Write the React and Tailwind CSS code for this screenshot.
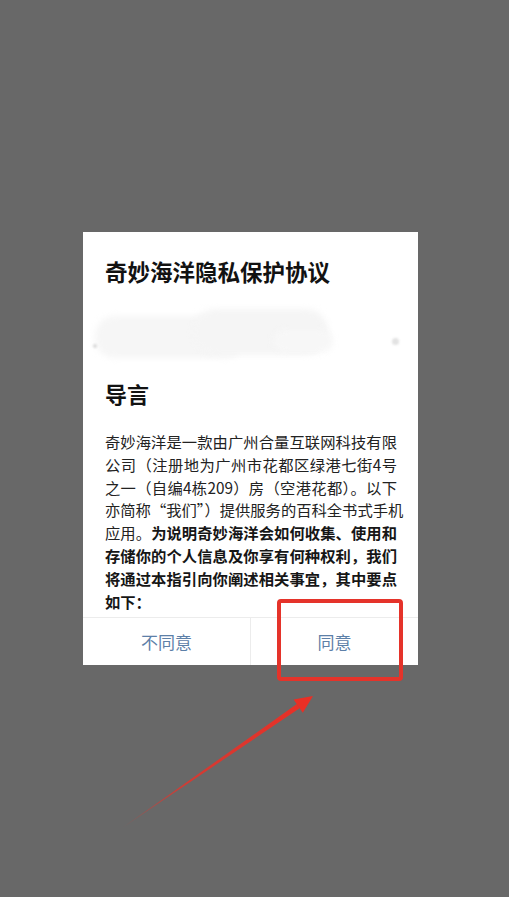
import React from 'react';

const lines = [
  { text: '奇妙海洋是一款由广州合量互联网科技有限' },
  { text: '公司（注册地为广州市花都区绿港七街4号' },
  { text: '之一（自编4栋209）房（空港花都）。以下' },
  { text: '亦简称“我们”）提供服务的百科全书式手机' },
  { text: '应用。', bold: '为说明奇妙海洋会如何收集、使用和' },
  { bold: '存储你的个人信息及你享有何种权利，我们' },
  { bold: '将通过本指引向你阐述相关事宜，其中要点' },
  { bold: '如下：', last: true },
];

export default function App() {
  return (
    <div className="relative w-full h-[897px] bg-[#686868] overflow-hidden pt-[232px] pl-[83px] font-['Noto_Sans_CJK_SC','Noto_Sans',sans-serif]">
      {/* dialog */}
      <div className="w-[335px] h-[433px] bg-white flex flex-col">
        <div className="h-[385px] overflow-hidden px-[22px] pt-[24px]">
          <h1 className="text-[22.5px] leading-[30px] font-bold text-[#121212]">奇妙海洋隐私保护协议</h1>

          {/* smudged-out line */}
          <div className="relative h-[54px] mt-[20px] -mx-[12px]">
            <div className="absolute left-[2px] top-[10px] w-[150px] h-[42px] rounded-[20px] bg-[#f6f6f6] blur-[3px]" />
            <div className="absolute left-[100px] top-[3px] w-[135px] h-[46px] rounded-[22px] bg-[#f5f5f5] blur-[3px]" />
            <div className="absolute left-[180px] top-[24px] w-[60px] h-[22px] rounded-[11px] bg-[#f7f7f7] blur-[3px]" />
            <div className="absolute left-[0px] top-[38px] w-[4px] h-[4px] rounded-full bg-[#d8d8d8] blur-[1px]" />
            <div className="absolute left-[299px] top-[32px] w-[7px] h-[7px] rounded-full bg-[#e2e2e2] blur-[1px]" />
          </div>

          <h2 className="mt-[18px] text-[22px] leading-[30px] font-bold text-[#121212]">导言</h2>

          <div className="mt-[22px] w-[292px] text-[15.3px] leading-[22.8px] text-[#222]">
            {lines.map((l, i) => (
              <div
                key={i}
                className={l.last ? 'text-left whitespace-nowrap' : 'text-justify [text-align-last:justify] whitespace-nowrap'}
              >
                {l.text}
                {l.bold && <span className="font-bold text-[#161616]">{l.bold}</span>}
              </div>
            ))}
          </div>
        </div>

        {/* buttons */}
        <div className="flex h-[48px] border-t border-[#ececec]">
          <button className="flex-1 flex items-center justify-center text-[17px] text-[#5d80a8] border-r border-[#ececec]">
            不同意
          </button>
          <button className="flex-1 flex items-center justify-center text-[17px] text-[#5d80a8]">
            同意
          </button>
        </div>
      </div>

      {/* red annotation box */}
      <div className="absolute left-[277px] top-[599px] w-[126px] h-[82px] border-[4px] border-[#e5332a] rounded-[4px]" />

      {/* red annotation arrow */}
      <svg className="absolute left-0 top-0" width="509" height="897" viewBox="0 0 509 897">
        <defs>
          <linearGradient id="arrowFade" x1="122" y1="828" x2="313" y2="696" gradientUnits="userSpaceOnUse">
            <stop offset="0" stopColor="#e5332a" stopOpacity="0.2" />
            <stop offset="0.35" stopColor="#e5332a" stopOpacity="0.85" />
            <stop offset="1" stopColor="#ea2f25" stopOpacity="1" />
          </linearGradient>
        </defs>
        <polygon points="122,828 299.6,708.3 296.8,704.1" fill="url(#arrowFade)" />
        <polygon points="313,696 302.8,712.8 293.6,699.6" fill="#ea2f25" />
      </svg>
    </div>
  );
}
